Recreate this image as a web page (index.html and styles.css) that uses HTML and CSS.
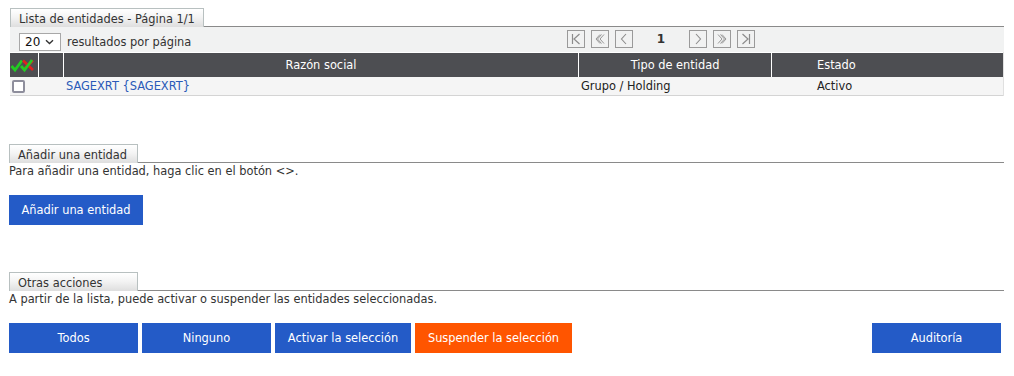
FILE: index.html
```html
<!DOCTYPE html>
<html lang="es">
<head>
<meta charset="utf-8">
<title>Lista de entidades</title>
<link rel="stylesheet" href="styles.css">
</head>
<body>
<div class="page">
  <section class="panel panel-list">
    <div class="tabbar"><div class="tab">Lista de entidades - Página 1/1</div><div class="tabline"></div></div>
    <div class="toolbar">
      <div class="perpage">
        <div class="select"><span>20</span><svg width="9" height="6" viewBox="0 0 9 6"><path d="M1 1.2 L4.5 4.5 L8 1.2" fill="none" stroke="#333" stroke-width="1.4"/></svg></div>
        <span class="perpage-label">resultados por página</span>
      </div>
      <div class="pager">
        <span class="pbtn"><svg width="16" height="16" viewBox="0 0 16 16"><path d="M4.5 3 V13 M11.5 3 L6 8 L11.5 13" fill="none" stroke="#8c8c8c" stroke-width="1.2"/></svg></span>
        <span class="pbtn"><svg width="16" height="16" viewBox="0 0 16 16"><path d="M8 3.5 L4 8 L8 12.5 M12 3.5 L8 8 L12 12.5 M9.5 3.5 L5.5 8 L9.5 12.5" fill="none" stroke="#8c8c8c" stroke-width="0.9"/></svg></span>
        <span class="pbtn"><svg width="16" height="16" viewBox="0 0 16 16"><path d="M10 3 L5.5 8 L10 13" fill="none" stroke="#8c8c8c" stroke-width="1.1"/></svg></span>
        <span class="pnum">1</span>
        <span class="pbtn"><svg width="16" height="16" viewBox="0 0 16 16"><path d="M6 3 L10.5 8 L6 13" fill="none" stroke="#8c8c8c" stroke-width="1.1"/></svg></span>
        <span class="pbtn"><svg width="16" height="16" viewBox="0 0 16 16"><path d="M4 3.5 L8 8 L4 12.5 M8 3.5 L12 8 L8 12.5 M6.5 3.5 L10.5 8 L6.5 12.5" fill="none" stroke="#8c8c8c" stroke-width="0.9"/></svg></span>
        <span class="pbtn"><svg width="16" height="16" viewBox="0 0 16 16"><path d="M11.5 3 V13 M4.5 3 L10 8 L4.5 13" fill="none" stroke="#8c8c8c" stroke-width="1.2"/></svg></span>
      </div>
    </div>
    <div class="grid">
      <div class="row head">
        <div class="c c-chk"><svg width="26" height="16" viewBox="0 0 26 16"><path d="M1.5 9 L5 13 L12 3.5" fill="none" stroke="#22cc22" stroke-width="2.8"/><path d="M13 3.5 L23 13 M23 3.5 L13 13" fill="none" stroke="#e02020" stroke-width="2.6"/><path d="M11 9 L14.5 13 L22 3" fill="none" stroke="#22cc22" stroke-width="2.8"/></svg></div>
        <div class="c c-blank"></div>
        <div class="c c-name">Razón social</div>
        <div class="c c-type">Tipo de entidad</div>
        <div class="c c-state">Estado</div>
      </div>
      <div class="row data">
        <div class="c c-chk"><span class="box"></span></div>
        <div class="c c-blank"></div>
        <div class="c c-name"><a href="#" class="link">SAGEXRT {SAGEXRT}</a></div>
        <div class="c c-type">Grupo / Holding</div>
        <div class="c c-state">Activo</div>
      </div>
    </div>
  </section>

  <section class="panel panel-add">
    <div class="tabbar"><div class="tab tab-fixed">Añadir una entidad</div><div class="tabline"></div></div>
    <p class="desc">Para añadir una entidad, haga clic en el botón &lt;&gt;.</p>
    <div class="actions">
      <button class="btn btn-add">Añadir una entidad</button>
    </div>
  </section>

  <section class="panel panel-other">
    <div class="tabbar"><div class="tab tab-fixed">Otras acciones</div><div class="tabline"></div></div>
    <p class="desc">A partir de la lista, puede activar o suspender las entidades seleccionadas.</p>
    <div class="actions actions-row">
      <button class="btn w129">Todos</button>
      <button class="btn w129">Ninguno</button>
      <button class="btn w136">Activar la selección</button>
      <button class="btn btn-orange w157">Suspender la selección</button>
      <button class="btn w129 push-right">Auditoría</button>
    </div>
  </section>
</div>
</body>
</html>
```

FILE: styles.css
```css
* { box-sizing: border-box; }
html, body { margin: 0; padding: 0; background: #fff; }
body {
  font-family: "DejaVu Sans", sans-serif;
  font-size: 11.4px;
  color: #222;
}
.page { padding: 8px 10px 0 9px; }

.panel-list { margin-left: 1px; }

.tabbar { display: flex; align-items: flex-end; height: 19px; }
.tab {
  height: 19px;
  padding: 3px 8px 0 8px;
  border: 1px solid #b8c0c0;
  border-bottom: none;
  background: linear-gradient(#ffffff 0%, #f4f4f4 45%, #dedede 100%);
  color: #333;
  line-height: 14px;
  white-space: nowrap;
}
.tab-fixed { width: 129px; }
.tabline { flex: 1; border-bottom: 1px solid #8a8a8a; }

.toolbar {
  display: flex;
  align-items: center;
  height: 25px;
  background: #f1f2f2;
}
.perpage { flex: 0 0 557px; display: flex; align-items: center; padding-left: 9px; margin-top: 4px; }
.select {
  width: 42px; height: 18px;
  background: #fff;
  border: 1px solid #a8a8a8;
  display: flex; align-items: center; justify-content: space-between;
  padding: 0 6px 0 5px;
  font-size: 12px; color: #111;
}
.perpage-label { margin-left: 6px; color: #333; }
.pager { display: flex; align-items: center; gap: 6px; margin-top: -2px; }
.pbtn {
  width: 18px; height: 18px;
  border: 1px solid #9a9a9a;
  display: flex; align-items: center; justify-content: center;
}
.pnum { width: 44px; text-align: center; font-weight: bold; font-size: 12px; color: #333; }

.grid { border-right: 1px solid #e0e0e0; }
.row { display: flex; }
.head { height: 25px; background: #4d4e52; color: #fff; border-top: 1px solid #fff; }
.head .c { border-left: 1px solid #fff; display: flex; align-items: center; }
.head .c:first-child { border-left: none; }
.data { height: 19px; background: #f5f5f5; border-bottom: 1px solid #d4d4d4; }
.data .c { display: flex; align-items: center; }
.c-chk { width: 28px; justify-content: center; }
.head .c-chk { justify-content: flex-start; padding-left: 0; }
.c-blank { width: 25px; }
.c-name { width: 515px; }
.head .c-name { justify-content: center; }
.data .c-name { padding-left: 3px; }
.c-type { width: 193px; }
.head .c-type { justify-content: center; }
.data .c-type { padding-left: 3px; }
.c-state { flex: 1; padding-left: 46px; }
.head .c-state { padding-left: 45px; }
.data .c-chk { justify-content: flex-start; padding-left: 2px; }
.box {
  width: 13px; height: 13px;
  border: 2px solid #8e8e9c;
  border-radius: 2px;
  background: #fff;
}
.link { color: #2a5ab8; text-decoration: none; }

.panel-add { margin-top: 48px; }
.panel-other { margin-top: 47px; }
.desc { margin: 1px 0 0 0; line-height: 14px; color: #333; }
.actions { margin-top: 17px; }
.panel-other .actions { margin-top: 17px; }
.actions-row { display: flex; gap: 4px; }
.btn {
  height: 30px;
  border: none;
  background: #245bc7;
  color: #fff;
  font-family: inherit;
  font-size: 11.4px;
  padding: 0;
  cursor: pointer;
}
.btn-add { width: 134px; }
.btn-orange { background: #ff5500; }
.w129 { width: 129px; }
.w136 { width: 136px; }
.w157 { width: 157px; }
.push-right { margin-left: auto; margin-right: 3px; }
```
